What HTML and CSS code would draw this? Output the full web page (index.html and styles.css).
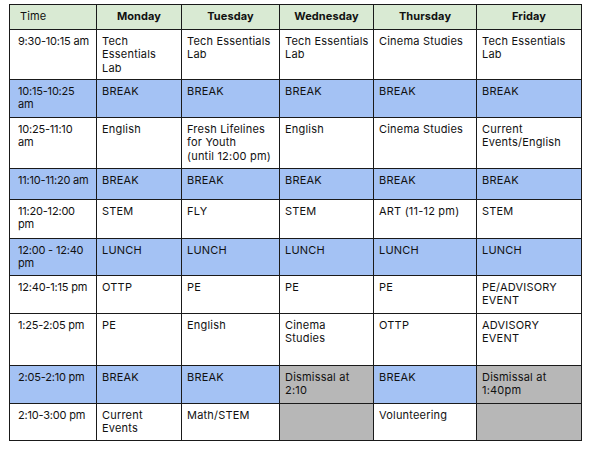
FILE: index.html
```html
<!DOCTYPE html>
<html>
<head>
<meta charset="utf-8">
<link rel="stylesheet" href="styles.css">
</head>
<body>
<div class="page">
<table class="sched">
<colgroup>
<col class="c-time"><col class="c-mon"><col class="c-tue"><col class="c-wed"><col class="c-thu"><col class="c-fri">
</colgroup>
<thead>
<tr class="r-head">
<th class="time-h">Time</th><th>Monday</th><th>Tuesday</th><th>Wednesday</th><th>Thursday</th><th>Friday</th>
</tr>
</thead>
<tbody>
<tr class="h50"><td class="t">9:30-10:15 am</td><td>Tech<br>Essentials<br>Lab</td><td>Tech Essentials<br>Lab</td><td>Tech Essentials<br>Lab</td><td>Cinema Studies</td><td>Tech Essentials<br>Lab</td></tr>
<tr class="brk h38"><td class="t">10:15-10:25<br>am</td><td>BREAK</td><td>BREAK</td><td>BREAK</td><td>BREAK</td><td>BREAK</td></tr>
<tr class="h51"><td class="t">10:25-11:10<br>am</td><td>English</td><td>Fresh Lifelines<br>for Youth<br>(until 12:00 pm)</td><td>English</td><td>Cinema Studies</td><td>Current<br>Events/English</td></tr>
<tr class="brk h31"><td class="t">11:10-11:20 am</td><td>BREAK</td><td>BREAK</td><td>BREAK</td><td>BREAK</td><td>BREAK</td></tr>
<tr class="h39"><td class="t">11:20-12:00<br>pm</td><td>STEM</td><td>FLY</td><td>STEM</td><td>ART (11-12 pm)</td><td>STEM</td></tr>
<tr class="brk h37"><td class="t">12:00 - 12:40<br>pm</td><td>LUNCH</td><td>LUNCH</td><td>LUNCH</td><td>LUNCH</td><td>LUNCH</td></tr>
<tr class="h38"><td class="t">12:40-1:15 pm</td><td>OTTP</td><td>PE</td><td>PE</td><td>PE</td><td>PE/ADVISORY<br>EVENT</td></tr>
<tr class="h52"><td class="t">1:25-2:05 pm</td><td>PE</td><td>English</td><td>Cinema<br>Studies</td><td>OTTP</td><td>ADVISORY<br>EVENT</td></tr>
<tr class="brk h38"><td class="t">2:05-2:10 pm</td><td>BREAK</td><td>BREAK</td><td class="gray">Dismissal at<br>2:10</td><td>BREAK</td><td class="gray">Dismissal at<br>1:40pm</td></tr>
<tr class="h37"><td class="t">2:10-3:00 pm</td><td>Current<br>Events</td><td>Math/STEM</td><td class="gray"></td><td class="white">Volunteering</td><td class="gray"></td></tr>
</tbody>
</table>
</div>
</body>
</html>
```

FILE: styles.css
```css
html, body {
  margin: 0;
  padding: 0;
  background: #ffffff;
}
.page {
  padding: 4px 9px 0 9px;
}
.sched {
  border-collapse: collapse;
  table-layout: fixed;
  width: 572px;
  font-family: Inter, "Open Sans", sans-serif;
  font-size: 11px;
  line-height: 13.4px;
  color: #111111;
}
.c-time { width: 87px; }
.c-mon { width: 85px; }
.c-tue { width: 98px; }
.c-wed { width: 94px; }
.c-thu { width: 103px; }
.c-fri { width: 105px; }
.sched th, .sched td {
  border: 1px solid #1a1a1a;
  padding: 5px 5px 2px 5px;
  vertical-align: top;
  text-align: left;
  box-sizing: border-box;
  white-space: nowrap;
  letter-spacing: 0.2px;
}
.sched td.t {
  padding-left: 8px;
  letter-spacing: -0.2px;
}
.r-head { height: 25px; background: #d9ead3; }
.sched th {
  vertical-align: middle;
  text-align: center;
  font-weight: 700;
  padding: 0 5px;
  letter-spacing: 0.1px;
}
.sched th.time-h {
  text-align: left;
  font-weight: 400;
  padding-left: 10px;
}
.brk { background: #a4c2f4; }
.gray { background: #b7b7b7; }
.white { background: #ffffff; }
.h31 { height: 31px; }
.h37 { height: 37px; }
.h38 { height: 38px; }
.h39 { height: 39px; }
.h50 { height: 50px; }
.h51 { height: 51px; }
.h52 { height: 52px; }
```
